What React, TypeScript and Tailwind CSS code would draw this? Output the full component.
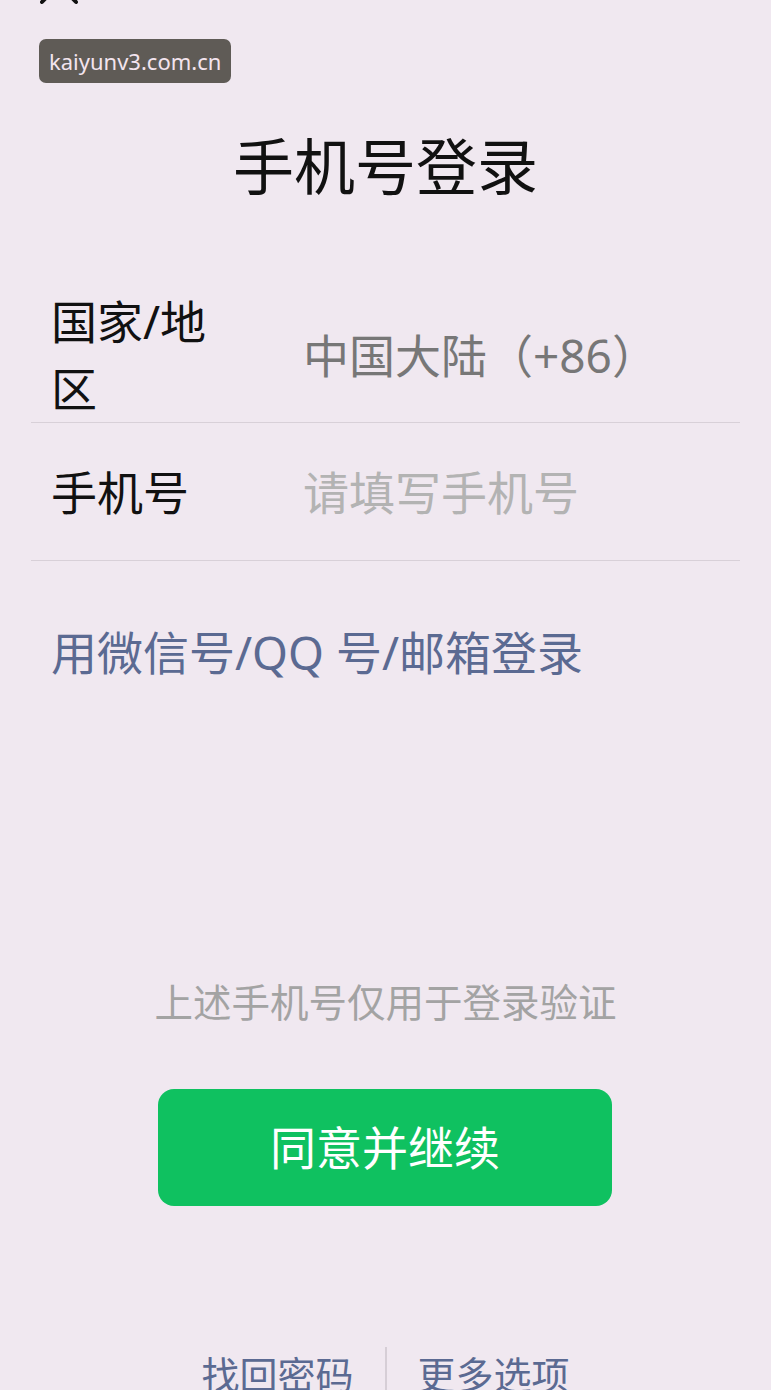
import React from "react";

const font = { fontFamily: '"Noto Sans", "Noto Sans CJK SC", sans-serif' };

export default function App() {
  return (
    <div
      className="w-full h-[1390px] overflow-hidden bg-[#f0e8f0] text-[#111111]"
      style={font}
    >
      <svg
        className="block ml-[38px] -mt-[36px]"
        width="42"
        height="42"
        viewBox="0 0 42 42"
        fill="none"
        stroke="#111111"
        strokeWidth="4"
        strokeLinecap="round"
      >
        <path d="M4 2 L38 38" />
        <path d="M38 2 L4 38" />
      </svg>

      <div className="mt-[33px] ml-[39px] w-fit h-[44px] px-[10px] rounded-[7px] bg-[#5f5b56] text-[#f3e4ee] text-[22px] leading-[44px]">
        kaiyunv3.com.cn
      </div>

      <div className="mt-[44px] h-[80px] text-center text-[61px] leading-[80px] font-normal">
        手机号登录
      </div>

      <div className="mx-[31px] mt-[81px]">
        <div className="flex items-center border-b border-[#d8d0d8] pl-[20px]">
          <div className="w-[252px] shrink-0">
            <div className="w-[172px] text-[46px] leading-[67px]">国家/地区</div>
          </div>
          <div className="text-[46px] leading-[67px] text-[#777777]">中国大陆（+86）</div>
        </div>
        <div className="flex items-center h-[138px] border-b border-[#d8d0d8] pl-[20px]">
          <div className="w-[252px] shrink-0 text-[46px] leading-[60px]">手机号</div>
          <div className="text-[46px] leading-[60px] text-[#b3b3b3]">请填写手机号</div>
        </div>
      </div>

      <div className="mt-[61px] ml-[51px] h-[60px] text-[46px] leading-[60px] text-[#5b6a92]">
        用微信号/QQ 号/邮箱登录
      </div>

      <div className="mt-[295px] h-[50px] text-center text-[38.5px] leading-[50px] text-[#a3a3a3]">
        上述手机号仅用于登录验证
      </div>

      <div className="mt-[62px] ml-[158px] w-[454px] h-[117px] rounded-[16px] bg-[#0fc160] flex items-center justify-center text-white text-[46px]">
        同意并继续
      </div>

      <div className="mt-[141px] flex justify-center items-start gap-[31px] h-[60px] text-[38px] text-[#5b6a92]">
        <div className="pt-[2px] leading-[50px] whitespace-nowrap">找回密码</div>
        <div className="w-[2px] h-[60px] bg-[#d6ced6]" />
        <div className="pt-[2px] leading-[50px] whitespace-nowrap">更多选项</div>
      </div>
    </div>
  );
}
